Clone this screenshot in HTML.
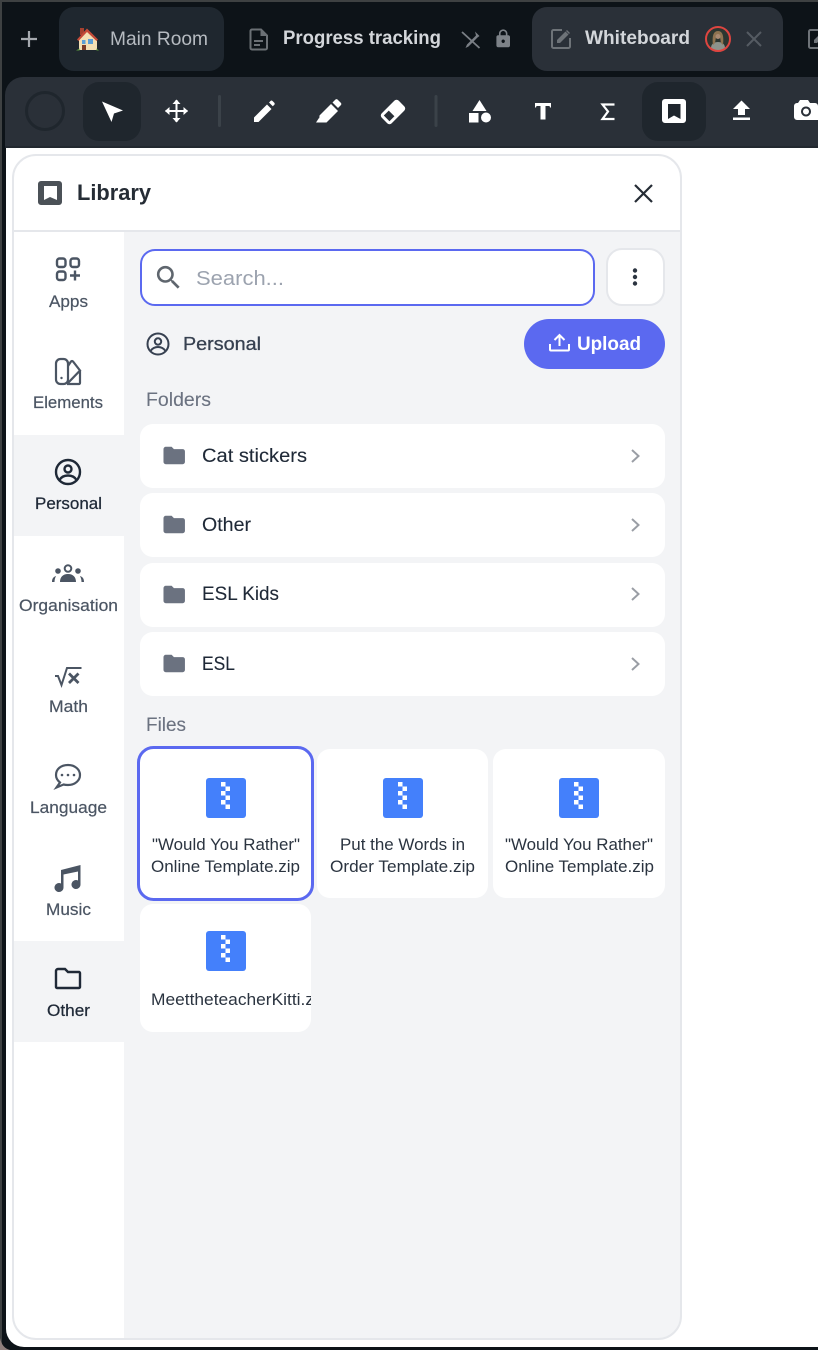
<!DOCTYPE html>
<html lang="en">
<head>
<meta charset="utf-8">
<title>Library</title>
<style>
html,body{margin:0;padding:0;width:818px;height:1350px;overflow:hidden;background:#0d1318}
svg{position:absolute;left:0;top:0;display:block}
text{font-family:"Liberation Sans",sans-serif;white-space:pre}
.side{font-size:16.5px;fill:#4b5563;stroke:#4b5563;stroke-width:.2px}
.sideA{font-size:16.5px;fill:#1f2937;stroke:#1f2937;stroke-width:.25px}
.row{font-size:19px;fill:#1f2937;stroke:#1f2937;stroke-width:.1px}
.sec{font-size:19px;fill:#6b7280;stroke:#6b7280;stroke-width:.1px}
.file{font-size:16.5px;fill:#2b3440}
</style>
</head>
<body>
<svg width="818" height="1350" viewBox="0 0 818 1350" xmlns="http://www.w3.org/2000/svg">
<defs>
<clipPath id="meet"><rect x="140" y="904" width="171" height="128"/></clipPath>
<g id="zip">
<rect x="0" y="0" width="40" height="40" rx="3" fill="#4480fb"/>
<g fill="#fff">
<rect x="15" y="4" width="4.5" height="4.5"/><rect x="19.500" y="8.500" width="4.500" height="4.500"/>
<rect x="15" y="13" width="4.5" height="4.5"/><rect x="19.500" y="17.500" width="4.500" height="4.500"/>
<rect x="15" y="22" width="4.5" height="4.5"/><rect x="19.500" y="26.500" width="4.500" height="4.500"/>
</g>
</g>
<path id="folder" d="M3 7a2 2 0 0 1 2-2h5l2 2h7.500a2 2 0 0 1 2 2v9a2 2 0 0 1-2 2H5a2 2 0 0 1-2-2z"/>
<g id="editbox" fill="none">
<path d="M12 2H3.500A1.500 1.500 0 0 0 2 3.500V18.500A1.500 1.500 0 0 0 3.500 20H18.500A1.500 1.500 0 0 0 20 18.500V10" stroke="#6e7378" stroke-width="2"/>
<path d="M7 15v-3L15.500 3.500l3 3L10 15z" fill="#6e7378"/>
<path d="M17 2l3 3-1 1-3-3z" fill="#6e7378"/>
</g>
</defs>

<!-- window frame -->
<rect x="0" y="0" width="818" height="1350" fill="#0d1318"/>
<rect x="0" y="0" width="818" height="2" fill="#3e4142"/>
<rect x="0" y="0" width="2" height="1350" fill="#3e4142"/>
<path d="M0 1338 Q2 1348 10 1350 H0z" fill="#8f7f7c"/>

<!-- tabs -->
<rect x="59" y="7" width="165" height="64" rx="15" fill="#1f272f"/>
<rect x="532" y="7" width="251" height="64" rx="15" fill="#2a3038"/>
<path d="M21 39h16M29 31v16" stroke="#a5a9ae" stroke-width="2.200"/>

<!-- house -->
<g>
<rect x="80" y="28" width="4" height="7" fill="#a5402f"/>
<path d="M79 39L87.500 31 97 39V50H79z" fill="#f4dfb4"/>
<path d="M77 39.500L87 28.500 98 39.500 96.500 41 87 32 78.500 41z" fill="#c64a38"/>
<rect x="82" y="40" width="3.500" height="4" fill="#5c9fd6"/>
<rect x="88" y="39" width="5" height="5" fill="#5c9fd6"/>
<rect x="82" y="45" width="4" height="5" fill="#7a3b28"/>
<path d="M76 50.500h3.500v-2zM96.500 48.500l2.500 2h-2.500z" fill="#5a9a3c"/>
</g>
<text x="110" y="45" font-size="19.500" fill="#b6bbc1" textLength="98" lengthAdjust="spacingAndGlyphs">Main Room</text>

<!-- doc icon -->
<path d="M252 29.500h9l6 6V48a1.500 1.500 0 0 1-1.500 1.500H252a1.500 1.500 0 0 1-1.500-1.500V31a1.500 1.500 0 0 1 1.500-1.500z" fill="none" stroke="#6b7075" stroke-width="2"/>
<path d="M260.500 29.500v6.500h6.500z" fill="#6b7075"/>
<path d="M254 41h9M254 45h6" stroke="#6b7075" stroke-width="2"/>
<text x="283" y="44" font-size="19" font-weight="700" fill="#d3d6da" textLength="158" lengthAdjust="spacingAndGlyphs">Progress tracking</text>
<!-- pin off -->
<path d="M462 32l17.500 16" stroke="#7a7f85" stroke-width="1.800"/>
<path d="M475 31.500l4.500 4.500-2 1.500-9 9-3 1.500 1.500-3.500 9-9z" fill="#7a7f85"/>
<!-- lock -->
<path transform="translate(493 28.500) scale(.85)" fill="#7d8288" d="M18 8h-1V6c0-2.760-2.240-5-5-5S7 3.240 7 6v2H6c-1.100 0-2 .9-2 2v10c0 1.100.9 2 2 2h12c1.100 0 2-.9 2-2V10c0-1.100-.9-2-2-2zm-6 9c-1.100 0-2-.9-2-2s.9-2 2-2 2 .9 2 2-.9 2-2 2zm3.100-9H8.900V6c0-1.710 1.390-3.100 3.100-3.100 1.710 0 3.100 1.390 3.100 3.100v2z"/>

<use href="#editbox" x="550" y="28"/>
<text x="585" y="44" font-size="19" font-weight="700" fill="#d3d6da" textLength="105" lengthAdjust="spacingAndGlyphs">Whiteboard</text>
<!-- avatar -->
<circle cx="718" cy="39" r="11" fill="#2c3630"/>
<path d="M711 48c0-4 3-6 7-6s7 2 7 6a11 11 0 0 1-14 0z" fill="#8d938c"/>
<path d="M713 45c-1-8 0-14 5-14s6 6 5 14l-2-2-1-6h-4l-1 6z" fill="#8e7350"/>
<circle cx="718" cy="36.500" r="2.500" fill="#a98a72"/>
<circle cx="718" cy="39" r="12" fill="none" stroke="#de4540" stroke-width="2"/>
<path d="M747 32l14 14M761 32l-14 14" stroke="#555b62" stroke-width="2"/>
<use href="#editbox" x="807" y="28"/>

<!-- toolbar -->
<path d="M5 148V95a18 18 0 0 1 18-18H818V148z" fill="#2a3038"/>
<rect x="5" y="146" width="813" height="2" fill="#22282f"/>
<circle cx="45" cy="111" r="18.500" fill="none" stroke="#1f262d" stroke-width="3"/>
<rect x="83" y="82" width="58" height="59" rx="16" fill="#1f262d"/>
<rect x="642" y="82" width="64" height="59" rx="16" fill="#1f262d"/>
<rect x="218" y="95" width="3" height="32" rx="1.500" fill="#3b4249"/>
<rect x="434.500" y="95" width="3" height="32" rx="1.500" fill="#3b4249"/>

<g fill="#fff">
<path d="M102 101.500L123 110.500 114 113.500 111.500 122z"/>
<path d="M165.500 111h22M176.500 100v22" stroke="#fff" stroke-width="2"/>
<path d="M176.500 99.500l4 4.500h-8zM176.500 122.500l4-4.500h-8zM165 111l4.500-4v8zM188 111l-4.500-4v8z"/>
<path d="M254 122v-4.500L267 104.500l4.500 4.500L258.500 122zM269 102.500l1.500-1.500q1-.9 2 0l1.800 1.800q.9 1 0 2l-1.500 1.500z"/>
<path d="M319.500 115.500l11.500-11.500 7 7-11.500 11.500-7.500 0z"/>
<path d="M332.500 102.500l3-3q1-.8 2 0l3.500 3.500q.8 1 0 2l-3 3z"/>
<path d="M316 122.500l3-4.500 3.500 3-1 1.500z"/>
<g transform="rotate(-45 393 112)">
<path fill-rule="evenodd" d="M384 105h18a3 3 0 0 1 3 3v8a3 3 0 0 1-3 3h-18a3 3 0 0 1-3-3v-8a3 3 0 0 1 3-3zM384 108v8h7v-8z"/>
</g>
<path d="M479.500 100l7 11h-14z"/>
<rect x="469" y="113" width="9.500" height="9.500"/>
<circle cx="486" cy="117.500" r="5"/>
<path d="M535 103h16v4.500h-1l-.5-1.500h-4v13.500h-5V106h-4l-.5 1.500h-1z"/>
<path d="M614.500 104.500H602.500l5.500 7-5.500 7.500H614.500" fill="none" stroke="#fff" stroke-width="2.200"/>
<path fill-rule="evenodd" d="M665 99h18a3 3 0 0 1 3 3v18a3 3 0 0 1-3 3h-18a3 3 0 0 1-3-3v-18a3 3 0 0 1 3-3zM668 104v15l6-3.500 6.500 3.500v-15z"/>
<path d="M738 115v-6h-5l8.500-8.500 8.500 8.500h-5v6z"/>
<rect x="733" y="117.500" width="17" height="2.500"/>
<path fill-rule="evenodd" d="M800 100h8l2 3h5a3 3 0 0 1 3 3v14H797a3 3 0 0 1-3-3v-11a3 3 0 0 1 3-3h1zM806 106.500a5 5 0 1 0 .01 0zM806 108.500a3 3 0 1 1-.01 0z"/>
</g>

<!-- page white area -->
<path d="M6 148H818V1347H24a18 18 0 0 1-18-18z" fill="#fff"/>

<!-- panel -->
<rect x="13" y="155" width="668" height="1184" rx="23" fill="#fff"/>
<path d="M13 232H681V1316a23 23 0 0 1-23 23H124V232z" fill="#f3f4f6"/>
<rect x="13" y="435" width="111" height="101" fill="#f3f4f6"/>
<rect x="13" y="941" width="111" height="101" fill="#f3f4f6"/>
<rect x="13" y="230" width="668" height="2" fill="#e5e7eb"/>
<rect x="13" y="155" width="668" height="1184" rx="23" fill="none" stroke="#e5e7eb" stroke-width="2"/>

<!-- header -->
<path fill="#4b5157" fill-rule="evenodd" d="M41 181h18a3 3 0 0 1 3 3v18a3 3 0 0 1-3 3H41a3 3 0 0 1-3-3v-18a3 3 0 0 1 3-3zM44 186v14l6-3 7 3v-14z"/>
<text x="77" y="200" font-size="22" font-weight="700" fill="#252c35" textLength="74" lengthAdjust="spacingAndGlyphs">Library</text>
<path d="M635 185l17 17M652 185l-17 17" stroke="#252c35" stroke-width="2.200"/>

<!-- sidebar -->
<g fill="none" stroke="#4b5563" stroke-width="2.400">
<rect x="57" y="258.500" width="8.500" height="8.500" rx="2.500"/><rect x="70.500" y="258.500" width="8.500" height="8.500" rx="2.500"/><rect x="57" y="271.500" width="8.500" height="8.500" rx="2.500"/>
<path d="M70 275.500h10M75 270.500v10"/>
<rect x="56" y="359" width="12" height="25" rx="4.500" stroke-width="2.200"/>
<path d="M68 366l3-4.500q1-1 2 0l7 9-12.500 13M67 384H79a1 1 0 0 0 1-1V371" stroke-width="2.200"/>
</g>
<circle cx="61.500" cy="378" r="1.200" fill="#4b5563"/>
<g fill="none" stroke="#1f2937" stroke-width="2.400">
<circle cx="68" cy="472" r="12"/>
<circle cx="68" cy="469" r="3.500"/>
<path d="M59.500 480c2-3.500 5-4.500 8.500-4.500s6.500 1 8.500 4.500"/>
</g>
<g fill="#4b5563">
<circle cx="68" cy="568.500" r="3.300" fill="none" stroke="#4b5563" stroke-width="2"/>
<circle cx="58" cy="571" r="2.800"/><circle cx="78" cy="571" r="2.800"/>
<path d="M60 582c0-5 3-8 8-8s8 3 8 8zM52 582c0-3 1-5 4-6-1 2-1.500 4-1.500 6zM84 582c0-3-1-5-4-6 1 2 1.500 4 1.500 6z"/>
</g>
<path d="M55 676h3l3.500 9 5.500-17h14.500" fill="none" stroke="#4b5563" stroke-width="2"/>
<path d="M69 673.500l9.500 9.500M78.500 673.500L69 683" stroke="#4b5563" stroke-width="2.800"/>
<path d="M68 765c-7 0-12 4-12 10 0 3 1.500 5.500 4 7.500l-3.500 5 7-3c1.500.4 3 .5 4.500.5 7 0 12-4.500 12-10s-5-10-12-10z" fill="none" stroke="#4b5563" stroke-width="2.200"/>
<g fill="#4b5563"><circle cx="62" cy="775" r="1.300"/><circle cx="68" cy="775" r="1.300"/><circle cx="74" cy="775" r="1.300"/></g>
<path fill="#4b5563" d="M61 870l19.500-5v19.500a4.500 4.500 0 1 1-2.500-4v-9l-14.500 3v13a4.500 4.500 0 1 1-2.500-4z"/>
<path d="M56 971a2 2 0 0 1 2-2h7l3 3h11a1 1 0 0 1 1 1v14a1 1 0 0 1-1 1H57a1 1 0 0 1-1-1z" fill="none" stroke="#1f2937" stroke-width="2.400"/>

<text class="side" x="49" y="307" textLength="39" lengthAdjust="spacingAndGlyphs">Apps</text>
<text class="side" x="33" y="408" textLength="70" lengthAdjust="spacingAndGlyphs">Elements</text>
<text class="sideA" x="35" y="509" textLength="67" lengthAdjust="spacingAndGlyphs">Personal</text>
<text class="side" x="19" y="611" textLength="99" lengthAdjust="spacingAndGlyphs">Organisation</text>
<text class="side" x="49" y="712" textLength="39" lengthAdjust="spacingAndGlyphs">Math</text>
<text class="side" x="30" y="813" textLength="77" lengthAdjust="spacingAndGlyphs">Language</text>
<text class="side" x="46" y="915" textLength="45" lengthAdjust="spacingAndGlyphs">Music</text>
<text class="sideA" x="47" y="1016" textLength="43" lengthAdjust="spacingAndGlyphs">Other</text>

<!-- search -->
<rect x="141" y="250" width="453" height="55" rx="14" fill="#fff" stroke="#5b69f0" stroke-width="2"/>
<path transform="translate(153 262) scale(1.300)" fill="#5f666e" d="M15.500 14h-.79l-.28-.27C15.410 12.590 16 11.110 16 9.500 16 5.910 13.090 3 9.500 3S3 5.910 3 9.500 5.910 16 9.500 16c1.610 0 3.090-.59 4.230-1.570l.27.28v.79l5 4.990L20.490 19l-4.990-5zm-6 0C7.010 14 5 11.990 5 9.500S7.010 5 9.500 5 14 7.010 14 9.500 11.990 14 9.500 14z"/>
<text x="196" y="285" font-size="20.500" fill="#9ca3af" textLength="88" lengthAdjust="spacingAndGlyphs">Search...</text>
<rect x="607" y="249" width="57" height="56" rx="15" fill="#fff" stroke="#e5e7eb" stroke-width="2"/>
<g fill="#2b3440"><circle cx="635" cy="270.500" r="2.200"/><circle cx="635" cy="277" r="2.200"/><circle cx="635" cy="283.500" r="2.200"/></g>

<!-- personal + upload -->
<g fill="none" stroke="#374151" stroke-width="2">
<circle cx="158" cy="344" r="10.500"/>
<circle cx="158" cy="341.500" r="3.200"/>
<path d="M150.500 351c2-3 4.500-4 7.500-4s5.500 1 7.500 4"/>
</g>
<text x="183" y="350" font-size="18.500" fill="#374151" stroke="#374151" stroke-width=".3" textLength="78" lengthAdjust="spacingAndGlyphs">Personal</text>
<rect x="524" y="319" width="141" height="50" rx="25" fill="#5b69f0"/>
<path d="M550 344v5.500a1 1 0 0 0 1 1h17a1 1 0 0 0 1-1V344M559.500 346v-10.500M554.500 340l5-5 5 5" fill="none" stroke="#fff" stroke-width="2"/>
<text x="577" y="350" font-size="19" font-weight="700" fill="#fff" textLength="64" lengthAdjust="spacingAndGlyphs">Upload</text>

<text class="sec" x="146" y="406" textLength="65" lengthAdjust="spacingAndGlyphs">Folders</text>

<!-- folders -->
<g fill="#fff">
<rect x="140" y="424" width="525" height="64" rx="13"/>
<rect x="140" y="493" width="525" height="64" rx="13"/>
<rect x="140" y="563" width="525" height="64" rx="13"/>
<rect x="140" y="632" width="525" height="64" rx="13"/>
</g>
<g fill="#6b7280">
<use href="#folder" transform="translate(160 441) scale(1.160)"/>
<use href="#folder" transform="translate(160 510) scale(1.160)"/>
<use href="#folder" transform="translate(160 580) scale(1.160)"/>
<use href="#folder" transform="translate(160 649) scale(1.160)"/>
</g>
<text class="row" x="202" y="462" textLength="105" lengthAdjust="spacingAndGlyphs">Cat stickers</text>
<text class="row" x="202" y="531" textLength="49" lengthAdjust="spacingAndGlyphs">Other</text>
<text class="row" x="202" y="600" textLength="77" lengthAdjust="spacingAndGlyphs">ESL Kids</text>
<text class="row" x="202" y="670" textLength="33" lengthAdjust="spacingAndGlyphs">ESL</text>
<g fill="none" stroke="#9a9ea5" stroke-width="2">
<path d="M632 450l6.500 6-6.500 6"/>
<path d="M632 519l6.500 6-6.500 6"/>
<path d="M632 588l6.500 6-6.500 6"/>
<path d="M632 658l6.500 6-6.500 6"/>
</g>

<text class="sec" x="146" y="731" textLength="40" lengthAdjust="spacingAndGlyphs">Files</text>

<!-- files -->
<rect x="140" y="749" width="171" height="149" rx="13" fill="#fff"/>
<rect x="138.500" y="747.500" width="174" height="152" rx="15" fill="none" stroke="#5b69f0" stroke-width="3"/>
<rect x="317" y="749" width="171" height="149" rx="13" fill="#fff"/>
<rect x="493" y="749" width="172" height="149" rx="13" fill="#fff"/>
<rect x="140" y="904" width="171" height="128" rx="13" fill="#fff"/>
<use href="#zip" x="206" y="778"/>
<use href="#zip" x="383" y="778"/>
<use href="#zip" x="559" y="778"/>
<use href="#zip" x="206" y="931"/>
<text class="file" x="152" y="850" textLength="148" lengthAdjust="spacingAndGlyphs">"Would You Rather"</text>
<text class="file" x="151" y="872" textLength="149" lengthAdjust="spacingAndGlyphs">Online Template.zip</text>
<text class="file" x="340" y="850" textLength="125" lengthAdjust="spacingAndGlyphs">Put the Words in</text>
<text class="file" x="330" y="872" textLength="145" lengthAdjust="spacingAndGlyphs">Order Template.zip</text>
<text class="file" x="505" y="850" textLength="148" lengthAdjust="spacingAndGlyphs">"Would You Rather"</text>
<text class="file" x="505" y="872" textLength="149" lengthAdjust="spacingAndGlyphs">Online Template.zip</text>
<g clip-path="url(#meet)"><text class="file" x="151" y="1005" textLength="163" lengthAdjust="spacingAndGlyphs">MeettheteacherKitti.z</text></g>
</svg>
</body>
</html>
